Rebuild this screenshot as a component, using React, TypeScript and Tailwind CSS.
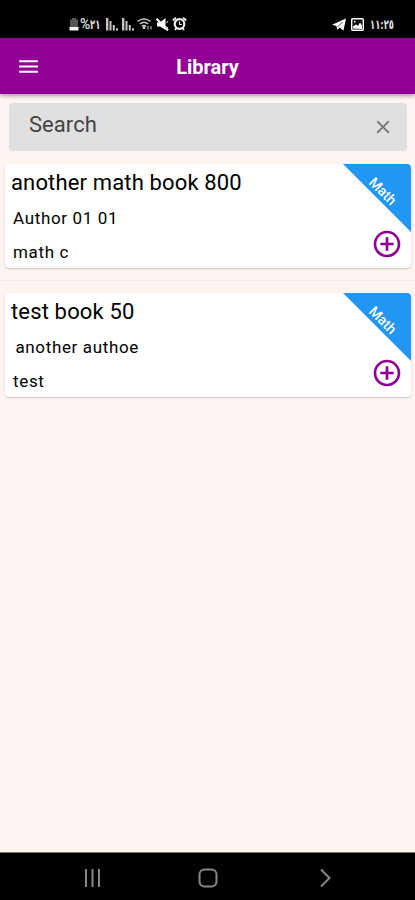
import { MdAddCircleOutline, MdClose, MdMenu } from 'react-icons/md';

interface Book {
    id: number;
    title: string;
    author: string;
    description: string;
    category: string;
}

const books: Book[] = [
    { id: 1, title: 'another math book 800', author: 'Author 01 01', description: 'math c', category: 'Math' },
    { id: 2, title: 'test book 50', author: '\u200aanother authoe', description: 'test', category: 'Math' },
];

function SignalIcon() {
    return (
        <svg className="h-[13px] w-[13px]" viewBox="0 0 13 13" fill="#c4c4c4">
            <path d="M0 0h2.400v12.500H0zM3.500 3h2v9.500h-2zM6.800 7h2v5.500h-2zM10 10.300h2v2.200h-2z" />
        </svg>
    );
}

function StatusBar() {
    return (
        <div className="flex h-[38px] shrink-0 items-center bg-black pt-[10px] pr-[20px] pl-[69px] text-white">
            <svg className="h-[13px] w-[10px]" viewBox="0 0 10 13">
                <path d="M3 0h4v1.500h2V9H1V1.500h2z" fill="#555" />
                <path d="M.5 9h9v3.500h-9z" fill="#f5f5f5" />
            </svg>
            <bdo dir="ltr" className="ml-[1px] flex w-[23px] items-center leading-none whitespace-nowrap text-[#e0e0e0]">
                <span className="w-[11px] text-[14px] font-medium">%</span>
                <span className="font-['DejaVu_Sans',sans-serif] text-[13px] font-bold">
                    <span className="inline-block origin-left scale-x-65">٢١</span>
                </span>
            </bdo>
            <div className="ml-[3px] flex gap-[3px]">
                <SignalIcon />
                <SignalIcon />
            </div>
            <svg className="ml-[2px] h-[14px] w-[16px]" viewBox="0 0 16 14" fill="none" stroke="#ccc" strokeWidth="1.500">
                <path d="M.5 4.500q6.500-5 13 0M2.800 7q4.200-3.500 8.400 0M5 9.500q2-1.800 4 0" />
                <path d="M7 9.500v2.500" strokeWidth="2.500" />
                <path d="M11 9v3.500M14 9v3.500" strokeWidth="1.200" stroke="#aaa" />
            </svg>
            <svg className="ml-[3px] h-[13px] w-[13px]" viewBox="0 0 13 13">
                <path d="M1 4.500h3L9.500 0v12L4 8.500H1z" fill="#fff" />
                <path d="M12 3L10.500 5M10.500 8.500L12 10" stroke="#ddd" />
                <path d="M.5.800L12 12.300" stroke="#fff" strokeWidth="2.200" />
            </svg>
            <svg className="ml-[3px] h-[14px] w-[15px]" viewBox="0 0 15 14" fill="none" stroke="#eee">
                <circle cx="7.500" cy="7" r="4.800" strokeWidth="2.200" />
                <path d="M7.500 4.500v3h2.300" strokeWidth="1.200" />
                <path d="M.8 3.500L4 .8M14.200 3.500L11 .8M3 13l1.500-2M12 13l-1.500-2" strokeWidth="2" />
            </svg>
            <div className="ml-auto flex items-center">
                <svg className="h-[13px] w-[14px]" viewBox="0 0 14 13">
                    <path d="M0 6.800L14 .5l-2.500 12-4-3L5.500 12 4.300 8z" fill="#fff" />
                    <path d="M5.500 9L10.500 4" fill="none" stroke="#222" strokeWidth=".8" />
                </svg>
                <svg className="ml-[5px] h-[13px] w-[13px]" viewBox="0 0 13 13">
                    <rect x=".7" y=".7" width="11.600" height="11.600" rx="1" fill="#111" stroke="#fff" strokeWidth="1.400" />
                    <path d="M2 10.500V8.500l3-2 2 1.500 2-3.500 2 3v3.500zM3 3h1.500v1.500H3z" fill="#fff" />
                </svg>
                <bdo dir="ltr" className="ml-[6px] w-[25px] font-['DejaVu_Sans',sans-serif] text-[13px] leading-none font-bold whitespace-nowrap text-[#e0e0e0]">
                    <span className="inline-block origin-left scale-x-65">١١:٢٥</span>
                </bdo>
            </div>
        </div>
    );
}

function BookCard({ book }: { book: Book }) {
    return (
        <article className="relative mr-[4px] ml-[5px] h-[104px] overflow-hidden rounded-[4px] bg-white pl-[6px] text-black shadow-[0_1px_2px_rgba(0,0,0,0.2)]">
            <h2 className="pt-[5px] text-[22px] leading-[28px] tracking-[0.15px]">{book.title}</h2>
            <p className="mt-[10px] pl-[2px] text-[17px] leading-[22px] tracking-[0.65px]">{book.author}</p>
            <p className="mt-[12px] pl-[2px] text-[17px] leading-[22px] tracking-[0.65px]">{book.description}</p>

            {/* Category ribbon */}
            <div className="absolute top-0 right-0 h-[68px] w-[68px] bg-[#2196f3] [clip-path:polygon(0_0,100%_0,100%_100%)]">
                <span className="absolute top-[18px] left-[21px] w-[38px] rotate-45 text-center text-[14px] leading-[18px] font-medium text-white">
                    {book.category}
                </span>
            </div>
            <button className="absolute right-[8px] bottom-[8px] text-[#8e0094]">
                <MdAddCircleOutline className="h-[32px] w-[32px]" />
            </button>
        </article>
    );
}

function NavigationBar() {
    return (
        <nav className="flex h-[48px] shrink-0 items-center border-t border-[#777] bg-black pt-[2px] pl-[83px]">
            <svg className="h-[20px] w-[20px]" viewBox="0 0 20 20" stroke="#888" strokeWidth="2">
                <path d="M3 1v18M9.500 1v18M16 1v18" />
            </svg>
            <svg className="ml-[95px] h-[20px] w-[20px]" viewBox="0 0 20 20" fill="none" stroke="#888" strokeWidth="2">
                <rect x="1.500" y="1.500" width="17" height="17" rx="5" />
            </svg>
            <svg className="ml-[97px] h-[20px] w-[20px]" viewBox="0 0 20 20" fill="none" stroke="#888" strokeWidth="2">
                <path d="M6 1.500L14.500 10 6 18.500" />
            </svg>
        </nav>
    );
}

export default function App() {
    return (
        <div className="flex h-[900px] w-[415px] flex-col overflow-hidden bg-[#fff4f2] font-[Roboto,sans-serif]">
            <StatusBar />
            <header className="z-10 grid h-[56px] shrink-0 grid-cols-[58px_1fr_58px] items-center bg-[#930096] text-white shadow-[0_2px_4px_rgba(0,0,0,0.35)]">
                <MdMenu className="ml-[16px] h-[25px] w-[25px]" />
                <h1 className="pt-[1px] text-center text-[20px] font-bold">Library</h1>
            </header>

            <main className="flex-1">
                <div className="mt-[9px] mr-[8px] mb-[13px] ml-[9px] flex h-[48px] items-center justify-between rounded-[4px] bg-[#e0e0e0] pr-[13px] pl-[20px]">
                    <span className="pb-[5px] text-[22px] tracking-[0.05px] text-[#444]">Search</span>
                    <MdClose className="h-[22px] w-[22px] text-[#777]" />
                </div>
                <BookCard book={books[0]} />
                <hr className="mt-[12px] mb-[12px] border-[#f8e8e8]" />
                <BookCard book={books[1]} />
            </main>
            <NavigationBar />
        </div>
    );
}
